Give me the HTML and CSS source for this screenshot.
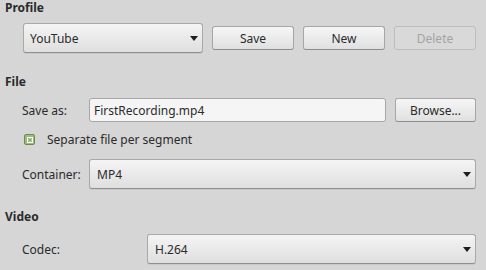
FILE: index.html
```html
<!DOCTYPE html>
<html>
<head>
<meta charset="utf-8">
<link rel="stylesheet" href="styles.css">
</head>
<body>
<div class="page">
  <div class="section-title">Profile</div>
  <div class="row profile-row">
    <div class="combo combo-profile"><span>YouTube</span><span class="arrow"></span></div>
    <div class="btn">Save</div>
    <div class="btn">New</div>
    <div class="btn disabled">Delete</div>
  </div>

  <div class="section-title title-file">File</div>
  <div class="row saveas-row">
    <div class="label label-saveas">Save as:</div>
    <div class="field">FirstRecording.mp4</div>
    <div class="btn">Browse...</div>
  </div>
  <div class="row check-row">
    <span class="check">
      <svg width="6" height="6" viewBox="0 0 6 6"><rect x="0" y="0" width="6" height="6" fill="#ffffff"/><path d="M1.2 1.2 L4.8 4.8 M4.8 1.2 L1.2 4.8" stroke="#86a866" stroke-width="1.5"/></svg>
    </span>
    <span class="check-text">Separate file per segment</span>
  </div>
  <div class="row container-row">
    <div class="label label-saveas">Container:</div>
    <div class="combo combo-wide"><span>MP4</span><span class="arrow"></span></div>
  </div>

  <div class="section-title title-video">Video</div>
  <div class="row codec-row">
    <div class="label label-codec">Codec:</div>
    <div class="combo combo-wide"><span>H.264</span><span class="arrow"></span></div>
  </div>
</div>
</body>
</html>
```
FILE: styles.css
```css
html, body {
  margin: 0;
  padding: 0;
  background: #d6d6d6;
}
body {
  width: 486px;
  height: 270px;
  overflow: hidden;
  font-family: "Noto Sans", "Open Sans", sans-serif;
  font-size: 12px;
  color: #2b2b2b;
}
.page {
  padding: 0 10px 0 5px;
}
.section-title {
  font-weight: bold;
  height: 16px;
  line-height: 16px;
}
.row {
  display: flex;
  align-items: center;
}
.profile-row {
  margin-top: 7px;
  padding-left: 18px;
  height: 30px;
  gap: 9px;
}
.combo {
  box-sizing: border-box;
  height: 30px;
  border: 1px solid #a9a9a9;
  border-bottom-color: #8f8f8f;
  border-radius: 3px;
  background: linear-gradient(#f4f4f4, #dfdfdf);
  display: flex;
  align-items: center;
  justify-content: space-between;
  padding: 0 4px 0 6px;
  box-shadow: 0 1px 0 rgba(0,0,0,0.06);
}
.combo-profile {
  width: 180px;
}
.combo-wide {
  flex: 1;
  padding-left: 7px;
}
.arrow {
  width: 0;
  height: 0;
  border-left: 4px solid transparent;
  border-right: 4px solid transparent;
  border-top: 5px solid #1e1e1e;
}
.btn {
  box-sizing: border-box;
  height: 24px;
  width: 82px;
  border: 1px solid #a6a6a6;
  border-bottom-color: #8e8e8e;
  border-radius: 3px;
  background: linear-gradient(#f6f6f6, #e0e0e0);
  display: flex;
  align-items: center;
  justify-content: center;
}
.btn.disabled {
  background: #d9d9d9;
  border-color: #bdbdbd;
  color: #a3a3a3;
}
.title-file {
  margin-top: 21px;
}
.saveas-row {
  margin-top: 8px;
  padding-left: 17px;
  height: 24px;
}
.label-saveas {
  width: 67px;
}
.field {
  box-sizing: border-box;
  width: 297px;
  height: 24px;
  border: 1px solid #a7a7a7;
  border-radius: 3px;
  background: #f5f5f5;
  padding-left: 4px;
  display: flex;
  align-items: center;
  margin-right: 9px;
}
.saveas-row .btn {
  width: 81px;
}
.check-row {
  margin-top: 12px;
  padding-left: 19px;
  height: 11px;
}
.check {
  box-sizing: border-box;
  width: 11px;
  height: 11px;
  border: 1px solid #6a8c4e;
  border-radius: 2px;
  background: #9dbd7e;
  display: flex;
  align-items: center;
  justify-content: center;
  margin-right: 12px;
}
.container-row {
  margin-top: 14px;
  padding-left: 17px;
  height: 30px;
}
.title-video {
  margin-top: 20px;
}
.codec-row {
  margin-top: 9px;
  padding-left: 17px;
  height: 30px;
}
.label-codec {
  width: 125px;
}
```
